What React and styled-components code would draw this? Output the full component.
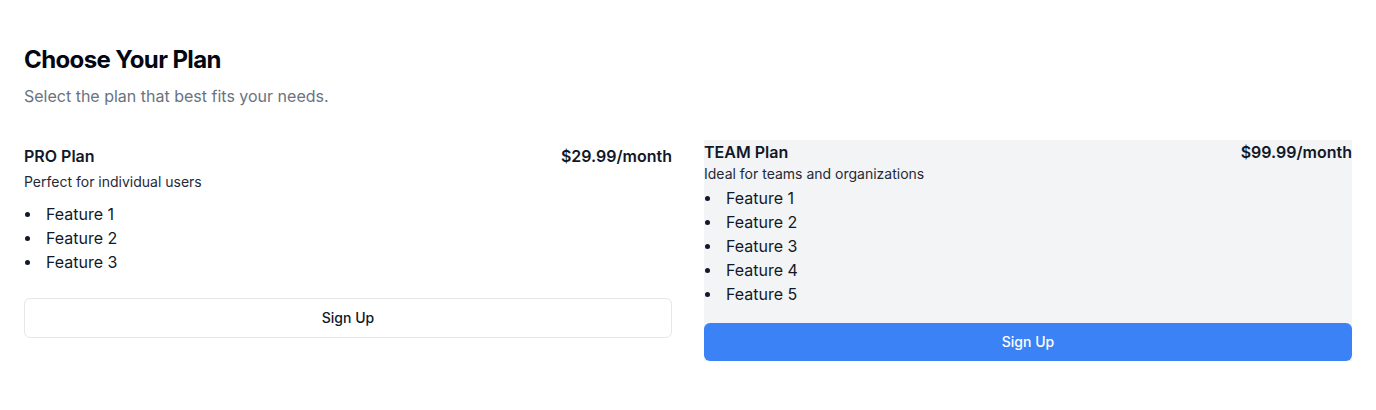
import React from "react";
import styled, { createGlobalStyle, css } from "styled-components";

const GlobalStyle = createGlobalStyle`
  * { box-sizing: border-box; }
  html, body { margin: 0; padding: 0; background: #ffffff; }
  body {
    font-family: Inter, "Noto Sans", "Liberation Sans", sans-serif;
    color: #111827;
    -webkit-font-smoothing: antialiased;
  }
`;

const Page = styled.div`
  padding: 44px 24px 24px;
`;

const Title = styled.h1`
  margin: 0;
  font-size: 24px;
  line-height: 32px;
  font-weight: 700;
  letter-spacing: -0.6px;
  color: #030712;
`;

const Subtitle = styled.p`
  margin: 8px 0 0;
  font-size: 16px;
  line-height: 24px;
  color: #6b7280;
`;

const Grid = styled.div`
  margin-top: 32px;
  display: grid;
  grid-template-columns: 1fr 1fr;
  column-gap: 32px;
  align-items: start;
`;

const Card = styled.div`
  display: flex;
  flex-direction: column;
  ${(p) =>
    p.$highlight
      ? css`
          background: #f3f4f6;
        `
      : css`
          padding-top: 4px;
        `}
`;

const CardHeader = styled.div`
  display: flex;
  justify-content: space-between;
  align-items: flex-start;
`;

const PlanName = styled.h3`
  margin: 0;
  font-size: 16px;
  line-height: 24px;
  font-weight: 600;
`;

const Price = styled.span`
  font-size: 16px;
  line-height: 24px;
  font-weight: 600;
`;

const Description = styled.p`
  margin: ${(p) => (p.$highlight ? "0" : "4px 0 0")};
  font-size: 14px;
  line-height: 20px;
  color: #1f2937;
`;

const Features = styled.ul`
  margin: ${(p) => (p.$highlight ? "2px 0 0" : "10px 0 0")};
  padding: 0;
  list-style: none;
`;

const Feature = styled.li`
  display: flex;
  align-items: center;
  font-size: 16px;
  line-height: 24px;
  color: #111827;

  &::before {
    content: "";
    flex: none;
    width: 5px;
    height: 5px;
    border-radius: 50%;
    background: #111827;
    margin: 1px 16px 0 1px;
  }
`;

const SignUp = styled.button`
  font-family: inherit;
  font-size: 14px;
  font-weight: 500;
  line-height: 20px;
  border-radius: 6px;
  cursor: pointer;
  width: 100%;
  ${(p) =>
    p.$primary
      ? css`
          margin-top: 17px;
          height: 38px;
          background: #3b82f6;
          color: #ffffff;
          border: none;
        `
      : css`
          margin-top: 24px;
          height: 40px;
          background: #ffffff;
          color: #111827;
          border: 1px solid #e5e7eb;
        `}
`;

const plans = [
  {
    name: "PRO Plan",
    price: "$29.99/month",
    description: "Perfect for individual users",
    features: ["Feature 1", "Feature 2", "Feature 3"],
    highlight: false,
  },
  {
    name: "TEAM Plan",
    price: "$99.99/month",
    description: "Ideal for teams and organizations",
    features: ["Feature 1", "Feature 2", "Feature 3", "Feature 4", "Feature 5"],
    highlight: true,
  },
];

export default function App() {
  return (
    <>
      <GlobalStyle />
      <Page>
        <Title>Choose Your Plan</Title>
        <Subtitle>Select the plan that best fits your needs.</Subtitle>
        <Grid>
          {plans.map((plan) => (
            <Card key={plan.name} $highlight={plan.highlight}>
              <CardHeader>
                <PlanName>{plan.name}</PlanName>
                <Price>{plan.price}</Price>
              </CardHeader>
              <Description $highlight={plan.highlight}>{plan.description}</Description>
              <Features $highlight={plan.highlight}>
                {plan.features.map((f) => (
                  <Feature key={f}>{f}</Feature>
                ))}
              </Features>
              <SignUp $primary={plan.highlight}>Sign Up</SignUp>
            </Card>
          ))}
        </Grid>
      </Page>
    </>
  );
}
